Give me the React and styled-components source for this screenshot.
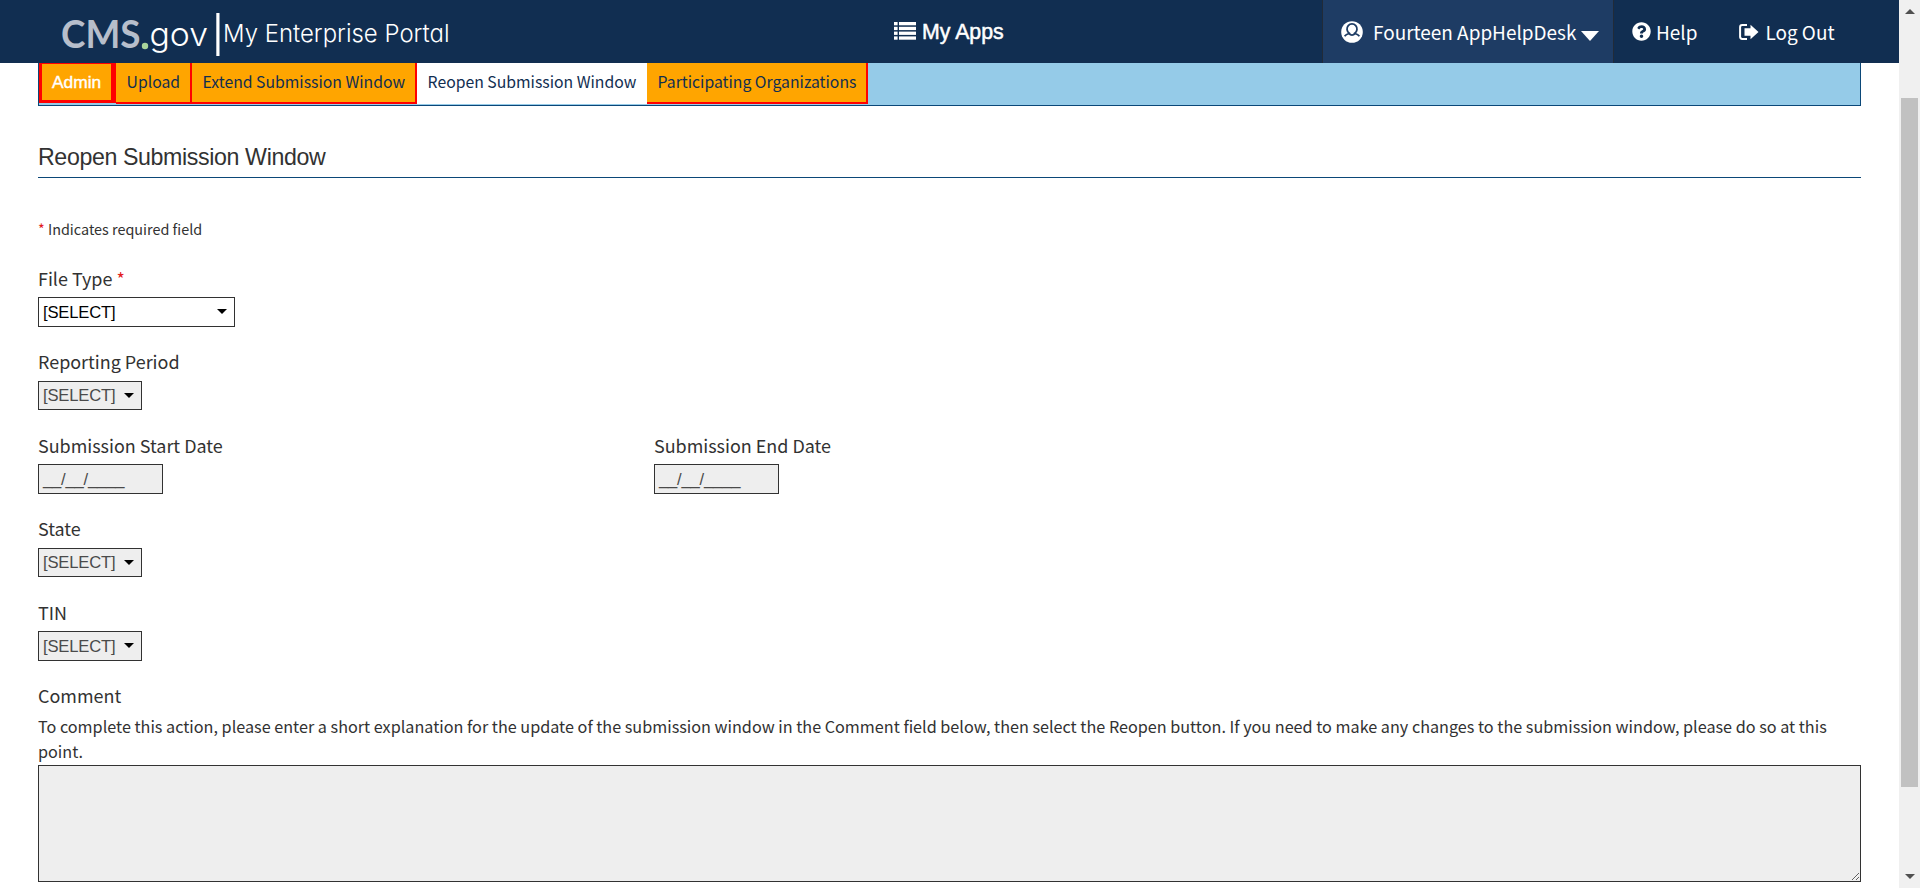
import React from "react";
import styled, { createGlobalStyle } from "styled-components";
import { FaQuestionCircle } from "react-icons/fa";

const sourceSans = '"Noto Sans CJK JP", "Noto Sans", sans-serif';
const arial = '"Liberation Sans", Arial, sans-serif';

const GlobalStyle = createGlobalStyle`
  * { box-sizing: border-box; }
  body {
    margin: 0;
    background: #fff;
    color: #323232;
    font-family: ${sourceSans};
    overflow: hidden;
  }
`;

const Screen = styled.div`
  display: flex;
  height: 888px;
  overflow: hidden;
`;

const Page = styled.div`
  flex: 1;
  min-width: 0;
`;

const Header = styled.header`
  display: flex;
  height: 63px;
  background: #112e51;
  color: #fff;
`;

const Logo = styled.svg`
  display: block;
  width: 460px;
  height: 63px;
`;

const PortalName = styled.text`
  font-feature-settings: "cv11";
`;

const HeaderItem = styled.a`
  display: flex;
  align-items: center;
  gap: ${(p) => p.$gap || 0}px;
  margin-left: ${(p) => p.$before || 0}px;
  font-size: 18.95px;
  line-height: 30px;
  white-space: nowrap;
  svg { flex: none; }
`;

const AppsItem = styled(HeaderItem)`
  font-family: ${arial};
  font-size: 21.3px;
  -webkit-text-stroke: 0.5px #fff;
  padding-top: 1px;
  svg { margin-bottom: 2px; }
`;

const UserItem = styled(HeaderItem)`
  width: 292px;
  padding-left: 18px;
  margin-left: auto;
  background: #1e3c64;
  border-left: 1px solid #212b38;
  border-right: 1px solid #212b38;
`;

const UserName = styled.span`
  margin: 0 5px 0 10px;
`;

const Caret = styled.svg`
  margin-top: 7px;
`;

const HeaderEnd = styled.div`
  display: flex;
  width: 285px;
`;

const Content = styled.main`
  width: 1823px;
  margin-left: 38px;
`;

const Tabs = styled.nav`
  display: flex;
  align-items: flex-start;
  height: 43px;
  background: #95cbe8;
  border: 1px solid #0b4778;
  border-top: 0;
`;

const Tab = styled.a`
  width: ${(p) => p.$width}px;
  height: 41px;
  padding: 7px 0 0 10.6px;
  background: ${(p) => (p.$current ? "#fff" : "#ffa500")};
  border: 0 solid #f00;
  border-width: ${(p) => (p.$current ? "0" : "0 2px 2px 0")};
  color: #112e51;
  font-size: 15.75px;
  line-height: 24px;
  white-space: nowrap;
`;

const AdminTab = styled(Tab)`
  height: 40px;
  padding: 6px 0 0 10px;
  border-width: 1px 5px 3px 3px;
  color: #fff;
  font-family: ${arial};
  font-size: 17.4px;
  -webkit-text-stroke: 0.4px #fff;
`;

const Title = styled.h1`
  margin: 38px 0 0;
  padding-bottom: 7px;
  border-bottom: 1px solid #0b4778;
  font: 400 23.2px/26px ${arial};
  letter-spacing: -0.38px;
`;

const RequiredNote = styled.p`
  margin: 41px 0 24px;
  font-size: 14.4px;
  line-height: 20px;
`;

const Star = styled.span`
  color: #e31c1c;
`;

const FieldRow = styled.div`
  display: flex;
`;

const Field = styled.div`
  display: flex;
  flex-direction: column;
  width: 616px;
  height: 83.5px;
`;

const Label = styled.label`
  display: block;
  height: 34.1px;
  margin-top: -0.1px;
  font-size: 17.95px;
  line-height: 30px;
`;

const Control = styled.div`
  display: flex;
  justify-content: space-between;
  align-items: center;
  width: ${(p) => p.$width}px;
  height: 29.5px;
  padding: 1px 7px 0 4px;
  border: 1px solid #323232;
  background: ${(p) => (p.$enabled ? "#fff" : "#eee")};
  color: ${(p) => (p.$enabled ? "#000" : "#4a4a4a")};
  font: 16.6px/27px ${arial};
  letter-spacing: -0.18px;
`;

const Arrow = styled.span`
  margin-bottom: 1px;
  border: 5px solid transparent;
  border-top: 5.5px solid #000;
  border-bottom: 0;
`;

const Comment = styled.section`
  display: flex;
  flex-direction: column;
`;

const Hint = styled.p`
  height: 50px;
  margin: -0.5px 0 1px;
  font-size: 16.2px;
  line-height: 25px;
`;

const CommentBox = styled.textarea`
  display: block;
  width: 100%;
  height: 117px;
  border: 1px solid #323232;
  border-radius: 0;
  background: #eee;
  resize: both;
`;

const Scrollbar = styled.div`
  display: flex;
  flex-direction: column;
  align-items: center;
  width: 21px;
  padding: 9px 0;
  background: #f0f0f0;
`;

const ScrollArrow = styled.span`
  border: 5px solid transparent;
  ${(p) => (p.$down ? "border-top-color: #505050; border-bottom: 0;" : "border-bottom-color: #505050; border-top: 0;")}
  margin-top: ${(p) => (p.$down ? "auto" : 0)};
`;

const Thumb = styled.div`
  width: 17px;
  height: 689px;
  margin-top: 84px;
  background: #c1c1c1;
`;

const PortalLogo = () => (
  <Logo viewBox="0 0 460 63">
    <text x="61" y="48.3" fontFamily="Lato" fontWeight="700" fontSize="37.5" fill="#b7becb" textLength="79.5" lengthAdjust="spacingAndGlyphs">CMS</text>
    <circle cx="145" cy="46" r="3.2" fill="#a9d59b" />
    <text x="149.5" y="46" fontFamily="Inter" fontWeight="300" fontSize="31.5" fill="#fff" textLength="58.5" lengthAdjust="spacingAndGlyphs">gov</text>
    <rect x="216.3" y="13" width="3.2" height="43" fill="#fff" />
    <PortalName x="223" y="42" fontFamily="Inter" fontWeight="300" fontSize="24.5" fill="#fff" textLength="226.5" lengthAdjust="spacingAndGlyphs">My Enterprise Portal</PortalName>
  </Logo>
);

const ListIcon = () => (
  <svg width="22" height="18" viewBox="0 0 22 18" fill="#fff">
    {[0, 4.8, 9.6, 14.4].map((y) => (
      <g key={y}>
        <rect x="0" y={y} width="3.6" height="3.3" />
        <rect x="5" y={y} width="17" height="3.3" />
      </g>
    ))}
  </svg>
);

const UserIcon = () => (
  <svg width="22" height="22" viewBox="0 0 22 22">
    <circle cx="11" cy="11" r="10.8" fill="#fff" />
    <path d="M3.6 15.2C5.2 13.2 7.2 12.9 8.2 12.3A5 5.2 0 1 1 13.8 12.3C14.8 12.9 16.8 13.2 18.4 15.2" fill="none" stroke="#1e3c64" strokeWidth="1.8" />
    <path d="M7.6 12.4C9.6 14.4 12.4 14.4 14.4 12.4" fill="none" stroke="#1e3c64" strokeWidth="1.6" />
  </svg>
);

const LogOutIcon = () => (
  <svg width="20" height="16" viewBox="0 0 20 16">
    <path d="M8 1.1H3.2Q1.1 1.1 1.1 3.2V12.8Q1.1 14.9 3.2 14.9H8" fill="none" stroke="#fff" strokeWidth="2" />
    <path d="M5.5 4.2H11.5V0.8L19.5 8L11.5 15.2V11.8H5.5Z" fill="#fff" />
  </svg>
);

const CaretIcon = () => (
  <Caret width="18" height="11" viewBox="0 0 18 11">
    <path d="M0 1H18L9 11Z" fill="#fff" />
  </Caret>
);

const SelectField = ({ label, required, enabled, width = 104 }) => (
  <Field>
    <Label>{label}{required && <Star> *</Star>}</Label>
    <Control $width={width} $enabled={enabled}>[SELECT]<Arrow /></Control>
  </Field>
);

const DateField = ({ label }) => (
  <Field>
    <Label>{label}</Label>
    <Control $width={125}>__/__/____</Control>
  </Field>
);

export default function App() {
  return (
    <>
      <GlobalStyle />
      <Screen>
        <Page>
          <Header>
            <PortalLogo />
            <AppsItem $before={434} $gap={6}><ListIcon />My Apps</AppsItem>
            <UserItem>
              <UserIcon />
              <UserName>Fourteen AppHelpDesk</UserName>
              <CaretIcon />
            </UserItem>
            <HeaderEnd>
              <HeaderItem $before={18} $gap={5}><FaQuestionCircle size={19} />Help</HeaderItem>
              <HeaderItem $before={42} $gap={6}><LogOutIcon />Log Out</HeaderItem>
            </HeaderEnd>
          </Header>
          <Content>
            <Tabs>
              <AdminTab $width={77}>Admin</AdminTab>
              <Tab $width={76}>Upload</Tab>
              <Tab $width={225}>Extend Submission Window</Tab>
              <Tab $width={230} $current>Reopen Submission Window</Tab>
              <Tab $width={221}>Participating Organizations</Tab>
            </Tabs>
            <Title>Reopen Submission Window</Title>
            <RequiredNote><Star>*</Star> Indicates required field</RequiredNote>
            <SelectField label="File Type" required enabled width={197} />
            <SelectField label="Reporting Period" />
            <FieldRow>
              <DateField label="Submission Start Date" />
              <DateField label="Submission End Date" />
            </FieldRow>
            <SelectField label="State" />
            <SelectField label="TIN" />
            <Comment>
              <Label>Comment</Label>
              <Hint>
                To complete this action, please enter a short explanation for the update of the submission window in the Comment field below, then select the Reopen button. If you need to make any changes to the submission window, please do so at this point.
              </Hint>
              <CommentBox disabled />
            </Comment>
          </Content>
        </Page>
        <Scrollbar>
          <ScrollArrow />
          <Thumb />
          <ScrollArrow $down />
        </Scrollbar>
      </Screen>
    </>
  );
}
